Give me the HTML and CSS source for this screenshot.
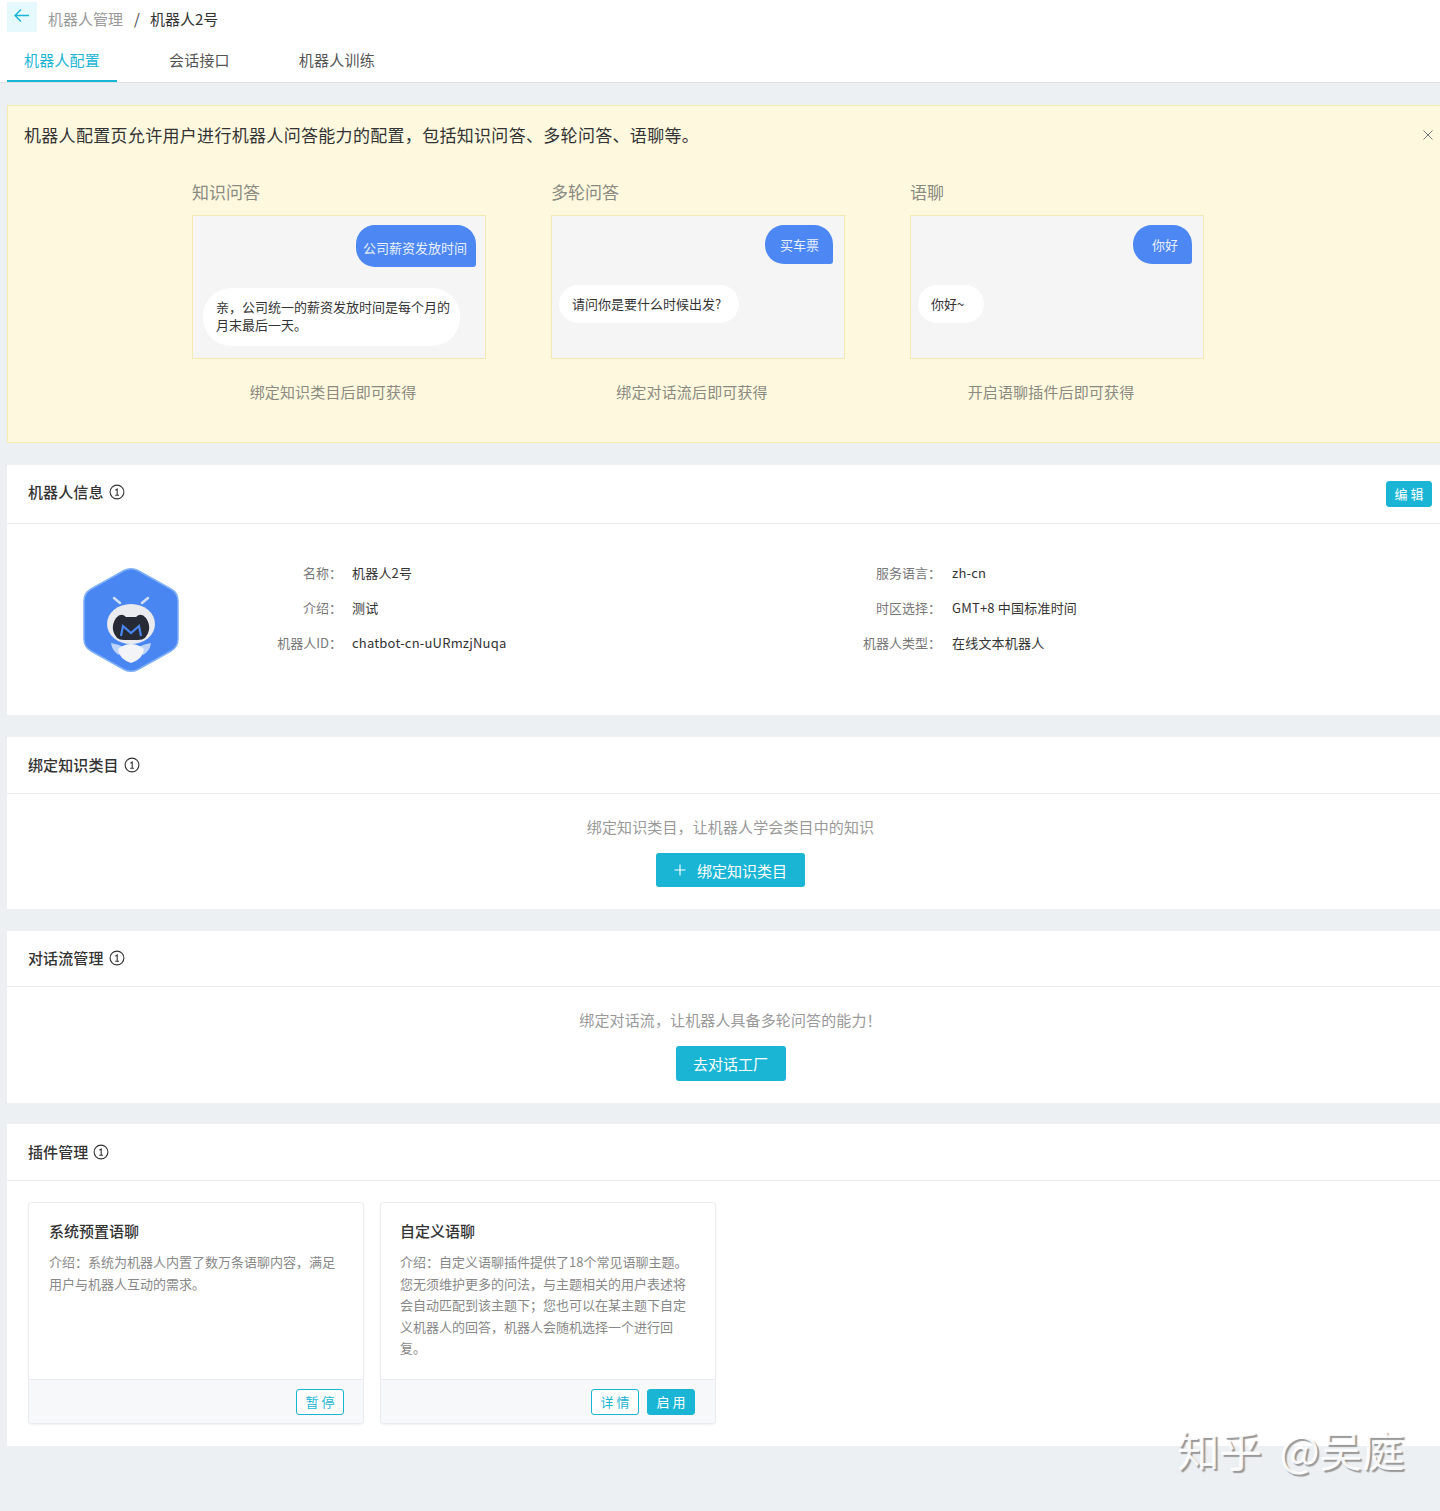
FILE: index.html
```html
<!DOCTYPE html>
<html lang="zh-CN">
<head>
<meta charset="utf-8">
<title>机器人配置</title>
<link rel="stylesheet" href="styles.css">
</head>
<body>
<header class="topbar">
  <div class="crumbs">
    <button class="back" aria-label="返回"><svg width="18" height="16" viewBox="0 0 18 16"><path d="M16 7.5H2M8 1.5 2 7.5l6 6" fill="none" stroke="#1ab5d5" stroke-width="1.4"/></svg></button>
    <span class="crumb-parent">机器人管理</span>
    <span class="crumb-sep">/</span>
    <span class="crumb-current">机器人2号</span>
  </div>
  <nav class="tabs">
    <a class="tab tab-active">机器人配置</a>
    <a class="tab">会话接口</a>
    <a class="tab">机器人训练</a>
  </nav>
</header>
<main class="content">
  <section class="alert">
    <div class="alert-head">
      <p class="alert-title">机器人配置页允许用户进行机器人问答能力的配置，包括知识问答、多轮问答、语聊等。</p>
      <svg class="alert-close" width="10" height="10" viewBox="0 0 10 10"><path d="M.5.5l9 9M9.5.5l-9 9" stroke="#777" stroke-width="1"/></svg>
    </div>
    <div class="demos">
      <div class="demo">
        <h3 class="demo-title">知识问答</h3>
        <div class="chat chat-a">
          <div class="bubble-q bubble-tall">公司薪资发放时间</div>
          <div class="bubble-a bubble-big">亲，公司统一的薪资发放时间是每个月的<br>月末最后一天。</div>
        </div>
        <p class="demo-note">绑定知识类目后即可获得</p>
      </div>
      <div class="demo">
        <h3 class="demo-title">多轮问答</h3>
        <div class="chat">
          <div class="bubble-q bubble-wide">买车票</div>
          <div class="bubble-a bubble-long">请问你是要什么时候出发?</div>
        </div>
        <p class="demo-note">绑定对话流后即可获得</p>
      </div>
      <div class="demo">
        <h3 class="demo-title">语聊</h3>
        <div class="chat">
          <div class="bubble-q bubble-hello">你好</div>
          <div class="bubble-a bubble-hi">你好~</div>
        </div>
        <p class="demo-note">开启语聊插件后即可获得</p>
      </div>
    </div>
  </section>

  <section class="panel">
    <div class="panel-head head-info">
      <h2 class="panel-title">机器人信息<svg class="info-icon" width="16" height="16" viewBox="0 0 16 16"><circle cx="8" cy="8" r="6.9" fill="none" stroke="#333" stroke-width="1.1"/><path d="M6.4 6.2 8.2 5v6M6.2 11.2h3.8" fill="none" stroke="#333" stroke-width="1.1"/></svg></h2>
      <button class="btn-small btn-solid btn-edit">编 辑</button>
    </div>
    <div class="info-body">
      <div class="avatar-cell">
        <svg width="96" height="106" viewBox="0 0 96 106">
          <path d="M41 3.5Q48 0 55 3.5L88 22Q95 26 95 34V72Q95 80 88 84L55 102.500Q48 106 41 102.500L8 84Q1 80 1 72V34Q1 26 8 22Z" fill="#4a86f1" stroke="#7fb0fa" stroke-width="1.500"/>
          <path d="M37 36 31 31M59 36 65 31" stroke="#cfdff8" stroke-width="2.500" stroke-linecap="round"/>
          <path d="M36 88Q29 84 28 76Q34 77 41 80Z M60 88Q67 84 68 76Q62 77 55 80Z" fill="#bcd4fa"/>
          <path d="M35 82Q48 72 61 82Q60 92 48 96Q36 92 35 82Z" fill="#f2f4f8"/>
          <ellipse cx="48" cy="57" rx="24" ry="20" fill="#e9ebee"/>
          <path d="M33 51Q38 45 43 50H53Q58 45 63 51Q67 57 66 63Q64 73 55 73H41Q32 73 30 63Q29 57 33 51Z" fill="#252a35"/>
          <path d="M38 69 40 59 48 66 56 59 58 69" fill="none" stroke="#4a86f1" stroke-width="2.200"/>
        </svg>
      </div>
      <dl class="info-col info-col-left">
        <dt>名称：</dt><dd>机器人2号</dd>
        <dt>介绍：</dt><dd>测试</dd>
        <dt>机器人ID：</dt><dd>chatbot-cn-uURmzjNuqa</dd>
      </dl>
      <dl class="info-col info-col-right">
        <dt>服务语言：</dt><dd>zh-cn</dd>
        <dt>时区选择：</dt><dd>GMT+8 中国标准时间</dd>
        <dt>机器人类型：</dt><dd>在线文本机器人</dd>
      </dl>
    </div>
  </section>

  <section class="panel">
    <div class="panel-head head-knowledge">
      <h2 class="panel-title">绑定知识类目<svg class="info-icon" width="16" height="16" viewBox="0 0 16 16"><circle cx="8" cy="8" r="6.9" fill="none" stroke="#333" stroke-width="1.1"/><path d="M6.4 6.2 8.2 5v6M6.2 11.2h3.8" fill="none" stroke="#333" stroke-width="1.1"/></svg></h2>
    </div>
    <div class="empty">
      <p class="empty-text">绑定知识类目，让机器人学会类目中的知识</p>
      <button class="btn-large btn-bind"><svg class="plus" width="12" height="12" viewBox="0 0 12 12"><path d="M6 .5v11M.5 6h11" stroke="#fff" stroke-width="1.100"/></svg>绑定知识类目</button>
    </div>
  </section>

  <section class="panel">
    <div class="panel-head head-flow">
      <h2 class="panel-title">对话流管理<svg class="info-icon" width="16" height="16" viewBox="0 0 16 16"><circle cx="8" cy="8" r="6.9" fill="none" stroke="#333" stroke-width="1.1"/><path d="M6.4 6.2 8.2 5v6M6.2 11.2h3.8" fill="none" stroke="#333" stroke-width="1.1"/></svg></h2>
    </div>
    <div class="empty">
      <p class="empty-text">绑定对话流，让机器人具备多轮问答的能力！</p>
      <button class="btn-large btn-go">去对话工厂</button>
    </div>
  </section>

  <section class="panel panel-plugin">
    <div class="panel-head head-plugin">
      <h2 class="panel-title">插件管理<svg class="info-icon" width="16" height="16" viewBox="0 0 16 16"><circle cx="8" cy="8" r="6.9" fill="none" stroke="#333" stroke-width="1.1"/><path d="M6.4 6.2 8.2 5v6M6.2 11.2h3.8" fill="none" stroke="#333" stroke-width="1.1"/></svg></h2>
    </div>
    <div class="plugins">
      <article class="plugin">
        <div class="plugin-main">
          <h3 class="plugin-title">系统预置语聊</h3>
          <p class="plugin-desc">介绍：系统为机器人内置了数万条语聊内容，满足用户与机器人互动的需求。</p>
        </div>
        <div class="plugin-foot"><button class="btn-small btn-outline">暂 停</button></div>
      </article>
      <article class="plugin plugin-second">
        <div class="plugin-main">
          <h3 class="plugin-title">自定义语聊</h3>
          <p class="plugin-desc">介绍：自定义语聊插件提供了18个常见语聊主题。您无须维护更多的问法，与主题相关的用户表述将会自动匹配到该主题下；您也可以在某主题下自定义机器人的回答，机器人会随机选择一个进行回复。</p>
        </div>
        <div class="plugin-foot"><button class="btn-small btn-outline">详 情</button><button class="btn-small btn-solid">启 用</button></div>
      </article>
    </div>
  </section>
</main>
<div class="watermark">知乎 @吴庭</div>
</body>
</html>
```
FILE: styles.css
```css
* { box-sizing: border-box; }
html, body { margin: 0; }
body {
  position: relative;
  min-height: 1511px;
  background: #edf0f3;
  color: #333;
  font-family: "Noto Sans CJK SC", "Noto Sans", sans-serif;
  text-spacing-trim: space-all;
  overflow-x: hidden;
}
p, h2, h3, dl, dd { margin: 0; }
button { font-family: inherit; cursor: pointer; }

.topbar {
  height: 83px;
  background: #fff;
  border-bottom: 1px solid #dfe3e7;
  padding: 2px 0 0 7px;
}
.crumbs { display: flex; align-items: flex-start; height: 30px; font-size: 15px; line-height: 34px; }
.back {
  width: 30px; height: 30px; padding: 0;
  margin-right: 11px;
  border: 0; background: #e6fafe;
  display: flex; align-items: center; justify-content: center;
}
.back svg { margin-top: -2px; }
.crumb-parent { color: #999; }
.crumb-sep { margin: 0 10px 0 11px; color: #444; }
.crumb-current { color: #333; }

.tabs { display: flex; gap: 35px; height: 50px; }
.tab {
  padding: 0 17px;
  height: 50px;
  font-size: 15px;
  letter-spacing: .2px;
  line-height: 56px;
  color: #555;
}
.tab-active { color: #1ab5d5; border-bottom: 2px solid #1ab5d5; }

.content { padding: 22px 0 0 7px; display: flex; flex-direction: column; gap: 22px; }

.alert {
  height: 338px;
  background: #fef8de;
  border: 1px solid #f6ebb0;
  border-right: 0;
  border-radius: 2px 0 0 2px;
  padding: 17px 7px 0 16px;
}
.alert-head { display: flex; justify-content: space-between; align-items: center; height: 24px; }
.alert-title { font-size: 17px; letter-spacing: .31px; line-height: 24px; color: #333; }
.alert-close { flex: none; }
.demos { display: flex; gap: 65px; padding: 33px 0 0 168px; }
.demo { width: 294px; }
.demo-title { font-size: 17px; font-weight: 400; line-height: 24px; color: #8a8a80; margin-bottom: 11px; }
.chat {
  height: 144px;
  background: #f5f5f6;
  border: 1px solid #f3e9b5;
  padding: 9px 11px 0 7px;
  display: flex; flex-direction: column; align-items: flex-start;
  gap: 21px;
  font-size: 13px;
}
.chat-a { padding: 9px 9px 0 10px; }
.bubble-q {
  align-self: flex-end;
  height: 39px;
  background: #4c87f3;
  color: #e9f0fd;
  border-radius: 19px 19px 3px 19px;
  line-height: 39px;
  padding: 0 9px 0 7px;
}
.bubble-wide { padding: 0 14px 0 15px; }
.bubble-hello { padding: 0 14px 0 19px; }
.bubble-tall { height: 42px; line-height: 45px; }
.bubble-a {
  background: #fff;
  color: #333;
  border-radius: 19px;
  height: 38px;
  line-height: 38px;
  padding: 0 13px;
}
.bubble-long { padding: 0 18px 0 13px; }
.bubble-hi { padding: 0 20px 0 13px; }
.bubble-big { height: 58px; width: 257px; border-radius: 28px; line-height: 18px; padding: 10px 0 0 13px; }
.demo-note { margin-top: 21px; text-align: center; font-size: 15px; letter-spacing: .15px; line-height: 24px; color: #8a8a80; padding-right: 12px; }

.panel { background: #fff; }
.panel-plugin { margin-top: -1px; }
.panel-head {
  display: flex; align-items: center; justify-content: space-between;
  padding: 0 8px 0 21px;
  border-bottom: 1px solid #e8eaed;
}
.head-info { height: 59px; padding-bottom: 4px; }
.head-knowledge { height: 57px; }
.head-flow { height: 56px; padding-bottom: 1px; }
.head-plugin { height: 57px; }
.btn-edit { margin-top: 3px; }
.panel-title { display: flex; align-items: center; font-size: 15px; font-weight: 500; color: #333; line-height: 24px; letter-spacing: .1px; }
.info-icon { margin-left: 5px; }

.info-body { height: 191px; display: flex; font-size: 13px; line-height: 35px; }
.avatar-cell { width: 180px; flex: none; padding: 43px 0 0 76px; }
.info-col {
  padding-top: 31px;
  display: grid;
  grid-template-columns: 155px 1fr;
  column-gap: 10px;
  grid-auto-rows: 35px;
  align-content: start;
  flex: 1;
}
.info-col-left { flex: none; width: 600px; }
.info-col-right { grid-template-columns: 154px 1fr; column-gap: 11px; }
.info-col dt { text-align: right; color: #777; }
.info-col dd { color: #333; letter-spacing: .2px; }

.empty { display: flex; flex-direction: column; align-items: center; padding-top: 21px; padding-left: 14px; }
.empty-text { font-size: 15px; letter-spacing: .12px; line-height: 24px; color: #999; }
.btn-large {
  height: 35px; margin-top: 14px;
  border: 0; border-radius: 3px;
  background: #1ab5d5; color: #fff;
  font-size: 15px;
  display: flex; align-items: center; justify-content: center;
}
.btn-bind { width: 149px; height: 34px; margin-bottom: 22px; }
.btn-go { width: 110px; margin-bottom: 22px; }
.plus { margin-right: 11px; }

.btn-small {
  height: 26px;
  border-radius: 3px;
  font-size: 13px;
  line-height: 24px;
  padding: 0;
  width: 48px;
}
.btn-edit { width: 46px; }
.btn-solid { background: #1ab5d5; color: #fff; border: 1px solid #1ab5d5; }
.btn-outline { background: #fff; color: #1ab5d5; border: 1px solid #1ab5d5; }

.plugins { display: flex; gap: 16px; padding: 21px 0 22px 21px; }
.plugin {
  width: 336px; height: 222px;
  background: #fff;
  border: 1px solid #e9ebee;
  border-radius: 4px;
  box-shadow: 0 1px 2px rgba(0,0,0,.06);
  display: flex; flex-direction: column;
  overflow: hidden;
}
.plugin-main { flex: 1; padding: 16px 20px 0 20px; }
.plugin-second .plugin-main { padding-left: 19px; padding-right: 19px; }
.plugin-title { font-size: 15px; font-weight: 500; line-height: 24px; color: #333; margin-bottom: 8px; }
.plugin-desc { font-size: 13px; line-height: 21.600px; color: #888; }
.plugin-foot {
  height: 44px;
  background: #f7f8f9;
  border-top: 1px solid #e9ebee;
  padding: 9px 19px 0 0;
  display: flex; justify-content: flex-end; gap: 8px;
}
.plugin-second .plugin-foot { padding-right: 20px; }

.watermark {
  position: absolute;
  left: 1177px; top: 1417px;
  font-size: 42.500px;
  word-spacing: 8px;
  line-height: 64px;
  white-space: nowrap;
  color: rgba(255,255,255,.92);
  text-shadow: 2px 2px 1px #999;
}
```
